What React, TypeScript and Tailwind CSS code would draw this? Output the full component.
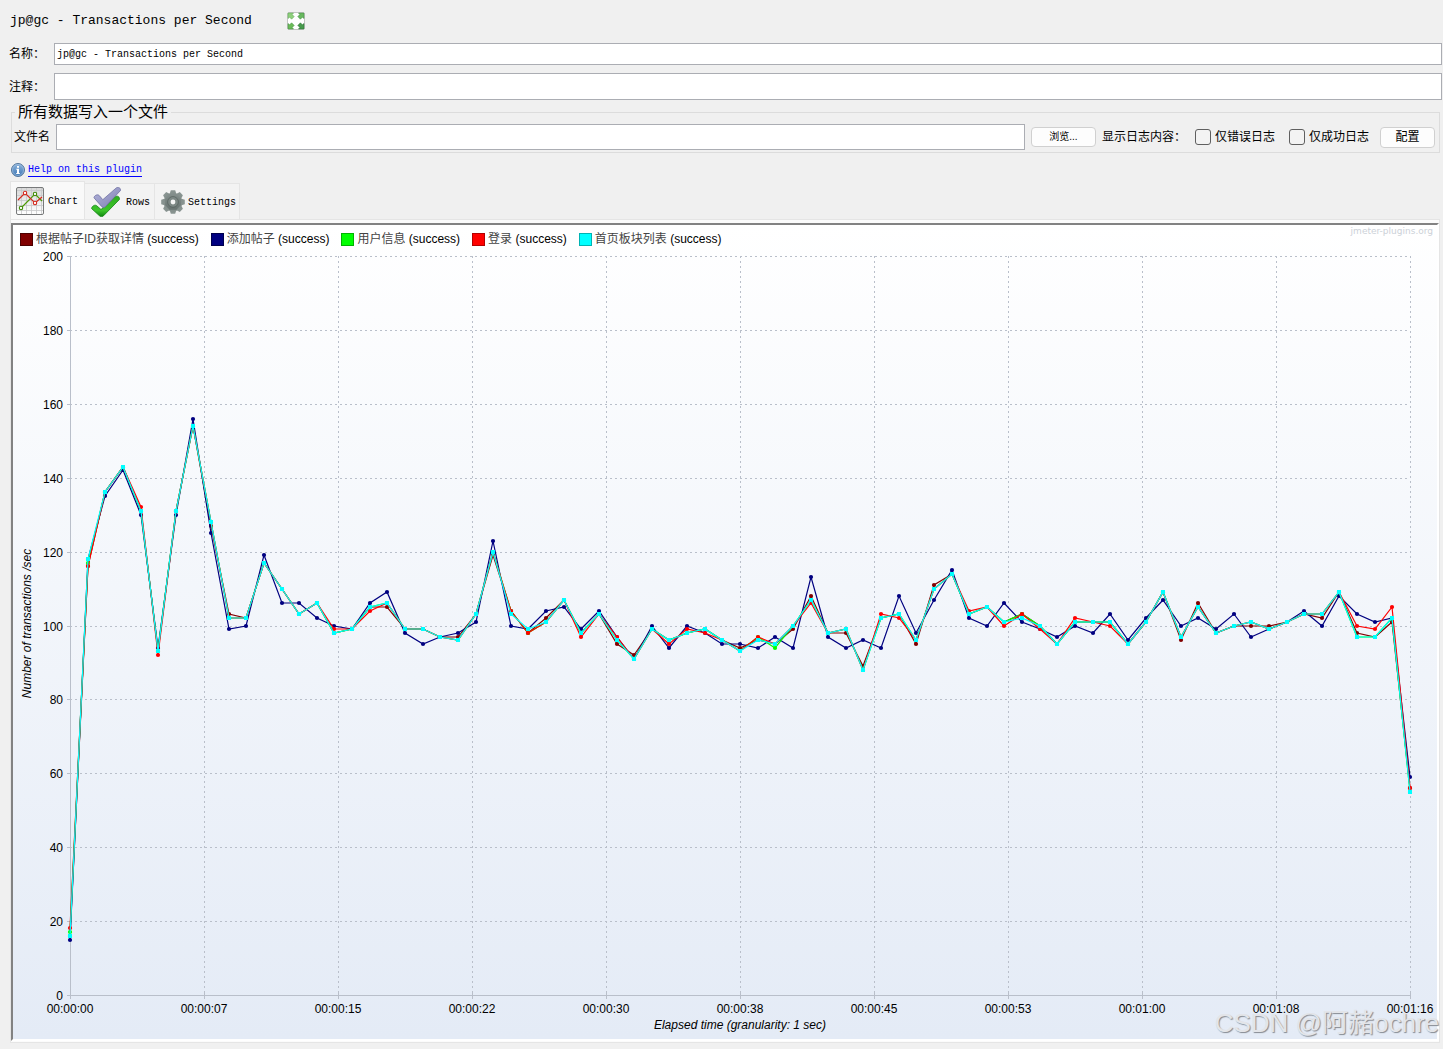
import React, { useEffect, useRef, useState } from 'react';

interface Series {
  name: string;
  color: string;
  edge: string;
  marker: 'circle' | 'square';
  values: number[];
}

// the first and last seconds are partial samples
const series: Series[] = [
  {
    name: '根据帖子ID获取详情',
    color: '#800000',
    edge: '#4d0000',
    marker: 'circle',
    values: [
      16, 116, 136, 143, 131, 93, 131, 154, 127, 103, 102, 117, 110, 103, 106,
      98, 99, 105, 105, 99, 99, 97, 97, 103, 119, 104, 98, 102, 107, 98, 103,
      95, 92, 99, 96, 98, 99, 96, 94, 96, 95, 99, 108, 98, 98, 89, 102, 103, 95,
      111, 114, 103, 105, 101, 103, 100, 95, 101, 101, 101, 95, 101, 109, 96,
      106, 98, 100, 100, 100, 101, 103, 102, 109, 98, 97, 101, 56,
    ],
  },
  {
    name: '添加帖子',
    color: '#000080',
    edge: '#00004d',
    marker: 'circle',
    values: [
      15, 118, 135, 142, 130, 94, 130, 156, 125, 99, 100, 119, 106, 106, 102,
      100, 99, 106, 109, 98, 95, 97, 98, 101, 123, 100, 99, 104, 105, 99, 104,
      97, 91, 100, 94, 100, 98, 95, 95, 94, 97, 94, 113, 97, 94, 96, 94, 108,
      98, 107, 115, 102, 100, 106, 101, 99, 97, 100, 98, 103, 96, 102, 107, 100,
      102, 99, 103, 97, 99, 101, 104, 100, 108, 103, 101, 102, 59,
    ],
  },
  {
    name: '用户信息',
    color: '#00ff00',
    edge: '#00b300',
    marker: 'circle',
    values: [
      17, 117, 136, 143, 131, 93, 131, 154, 128, 102, 102, 117, 110, 103, 106,
      98, 99, 105, 106, 99, 99, 97, 96, 103, 120, 104, 98, 101, 107, 98, 103,
      96, 91, 99, 96, 98, 99, 96, 93, 97, 94, 100, 107, 98, 99, 88, 102, 103,
      96, 110, 114, 103, 105, 101, 103, 100, 95, 101, 101, 101, 95, 101, 109,
      97, 105, 98, 100, 101, 99, 101, 103, 103, 109, 97, 97, 102, 55,
    ],
  },
  {
    name: '登录',
    color: '#ff0000',
    edge: '#b30000',
    marker: 'circle',
    values: [
      18, 116, 136, 143, 132, 92, 131, 154, 128, 102, 102, 117, 110, 103, 106,
      99, 99, 104, 106, 99, 99, 97, 96, 103, 120, 104, 98, 101, 107, 97, 103,
      97, 91, 99, 95, 99, 98, 96, 93, 97, 95, 100, 106, 98, 99, 88, 103, 102,
      96, 110, 114, 104, 105, 100, 103, 99, 95, 102, 101, 100, 95, 101, 109, 97,
      105, 98, 100, 101, 99, 101, 103, 103, 109, 100, 99, 105, 56,
    ],
  },
  {
    name: '首页板块列表',
    color: '#00ffff',
    edge: '#00b3b3',
    marker: 'square',
    values: [
      16, 118, 136, 143, 131, 93, 131, 154, 128, 102, 102, 117, 110, 103, 106,
      98, 99, 105, 106, 99, 99, 97, 96, 103, 120, 103, 99, 101, 107, 98, 103,
      96, 91, 99, 96, 98, 99, 96, 93, 96, 95, 100, 107, 98, 99, 88, 102, 103,
      96, 110, 114, 103, 105, 101, 102, 100, 95, 101, 101, 101, 95, 101, 109,
      97, 105, 98, 100, 101, 99, 101, 103, 103, 109, 97, 97, 102, 55,
    ],
  },
];

const timeLabels = [
  '00:00:00',
  '00:00:07',
  '00:00:15',
  '00:00:22',
  '00:00:30',
  '00:00:38',
  '00:00:45',
  '00:00:53',
  '00:01:00',
  '00:01:08',
  '00:01:16',
];

const rateLabels = [0, 20, 40, 60, 80, 100, 120, 140, 160, 180, 200];

const ExpandIcon = () => (
  <svg width="18" height="18" viewBox="0 0 18 18">
    <rect x="0.5" y="0.5" width="17" height="17" rx="1.5" fill="#fff" stroke="#c4c4c4" />
    <g strokeWidth="0.5">
      <path fill="#8fd07c" stroke="#5ba552" d="M1 1h5.5L5.2 2.600l2 2L4.600 7.200l-2-2L1 6.500z" />
      <path fill="#68b85f" stroke="#3c8a3c" d="M17 1h-5.500l1.300 1.600-2 2 2.600 2.600 2-2L17 6.500z" />
      <path fill="#6bbb58" stroke="#3c8a3c" d="M1 17h5.500l-1.300-1.600 2-2-2.600-2.600-2 2L1 11.500z" />
      <path fill="#479a4c" stroke="#2b6f31" d="M17 17h-5.500l1.300-1.600-2-2 2.600-2.600 2 2 1.600-1.300z" />
    </g>
  </svg>
);

const InfoIcon = () => (
  <svg width="14" height="14" viewBox="0 0 14 14">
    <defs>
      <linearGradient id="info" x1="0" y1="0" x2="0" y2="1">
        <stop offset="0" stopColor="#8db4dc" />
        <stop offset="1" stopColor="#3d77b5" />
      </linearGradient>
    </defs>
    <circle cx="7" cy="7" r="6.5" fill="url(#info)" stroke="#56789c" />
    <circle cx="7" cy="7" r="5.5" fill="none" stroke="#a9c5e2" strokeWidth="0.6" />
    <path fill="#fff" d="M6 3h2v1.700H6zM5.300 5.700H8V10h.8v1H5.200v-1H6V6.700h-.7z" />
  </svg>
);

const ChartIcon = () => (
  <svg width="28" height="28" viewBox="0 0 28 28">
    <defs>
      <linearGradient id="paper" x1="0" y1="0" x2="0" y2="1">
        <stop offset="0" stopColor="#d8d8d8" />
        <stop offset="1" stopColor="#fff" />
      </linearGradient>
    </defs>
    <rect x="0.5" y="0.5" width="27" height="27" rx="1.5" fill="url(#paper)" stroke="#77797a" />
    <path
      d="M5.500 1v26M10.500 1v26M15.500 1v26M20.500 1v26M25.500 1v26M1 3.500h26M1 8.500h26M1 13.500h26M1 18.500h26M1 23.500h26"
      stroke="#c6c8c9"
      strokeWidth="0.8"
    />
    <path d="M5 21 19 7l7 7" fill="none" stroke="#4e9a06" strokeWidth="1.2" />
    <path d="m2 13 7-7 10 10 7-6" fill="none" stroke="#d42a1e" strokeWidth="1.2" />
    <g fill="#fff" strokeWidth="1.1">
      <circle cx="9" cy="6" r="1.7" stroke="#d42a1e" />
      <circle cx="19" cy="16" r="1.7" stroke="#d42a1e" />
      <circle cx="5" cy="21" r="1.7" stroke="#3f8a05" />
      <circle cx="19" cy="7" r="1.7" stroke="#3f8a05" />
    </g>
  </svg>
);

const RowsIcon = () => (
  <svg width="30" height="30" viewBox="0 0 30 30">
    <defs>
      <linearGradient id="tickGreen" x1="0" y1="0" x2="0" y2="1">
        <stop offset="0" stopColor="#2fae20" />
        <stop offset="0.7" stopColor="#3cc42a" />
        <stop offset="1" stopColor="#0f8710" />
      </linearGradient>
      <linearGradient id="tickBlue" x1="0" y1="0" x2="1" y2="1">
        <stop offset="0" stopColor="#b4b5dc" />
        <stop offset="1" stopColor="#7d7fb2" />
      </linearGradient>
    </defs>
    <path
      d="M.6 21.600c0-2.400 3.700-4.600 5.400-2.600l4 3.500L24.500 9.600c2-1.300 4.600.4 3.900 2.900L12.600 28.700c-1.200 1.200-3 1.200-4.200 0z"
      fill="url(#tickGreen)"
      stroke="#138413"
      strokeWidth="0.8"
    />
    <path
      d="M3 10.800c0-2.200 3.600-4 5.200-2.300l3.600 4.200L25.300.9c2-1.200 4.800.2 4.200 2.600L14.300 19.800c-1 1-2.600 1-3.500-.1z"
      fill="url(#tickBlue)"
      stroke="#6e70a2"
      strokeWidth="0.8"
    />
  </svg>
);

const GearIcon = () => (
  <svg width="24" height="24" viewBox="0 0 24 24">
    <defs>
      <linearGradient id="gear" gradientUnits="userSpaceOnUse" x1="0" y1="0" x2="0" y2="24">
        <stop offset="0" stopColor="#8b9693" />
        <stop offset="1" stopColor="#5f6a68" />
      </linearGradient>
    </defs>
    <g fill="url(#gear)">
      <circle cx="12" cy="12" r="9.2" />
      {[0, 45, 90, 135, 180, 225, 270, 315].map((angle) => (
        <path key={angle} d="M9.800 0.200h4.400l1.200 4h-6.800z" transform={`rotate(${angle} 12 12)`} />
      ))}
    </g>
    <circle cx="12" cy="12" r="5.4" fill="none" stroke="#5b6663" strokeWidth="0.9" />
    <circle cx="12" cy="12" r="4.6" fill="#7d8885" />
    <circle cx="12" cy="12" r="2.4" fill="#f4f4f4" />
  </svg>
);

const Plot = () => {
  const ref = useRef<SVGSVGElement>(null);
  const [size, setSize] = useState({ width: 1424, height: 790 });

  // redraw the plot whenever the panel changes its size
  useEffect(() => {
    const svg = ref.current;
    if (!svg) return undefined;
    const observer = new ResizeObserver(() => {
      const box = svg.getBoundingClientRect();
      setSize({ width: Math.round(box.width), height: Math.round(box.height) });
    });
    observer.observe(svg);
    return () => observer.disconnect();
  }, []);

  const left = 57;
  const right = size.width - 27;
  const top = 7;
  const bottom = size.height - 44;
  const xAt = (ratio: number) => Math.round(left + (right - left) * ratio);
  const yAt = (value: number) => Math.round(bottom - ((bottom - top) * value) / 200);

  return (
    <svg
      ref={ref}
      className="block min-h-0 w-full flex-1 font-['Liberation_Sans',Arial,sans-serif] text-xs"
      role="img"
      aria-label="Transactions per Second"
    >
      <g stroke="#b9bfca" shapeRendering="crispEdges">
        {rateLabels.map((rate) => (
          <g key={rate}>
            <line x1={left - 3} x2={left} y1={yAt(rate) + 0.5} y2={yAt(rate) + 0.5} />
            <line
              x1={left}
              x2={right}
              y1={yAt(rate) + 0.5}
              y2={yAt(rate) + 0.5}
              strokeDasharray={rate === 0 ? undefined : '2 3'}
            />
          </g>
        ))}
        {timeLabels.map((label, i) => (
          <g key={label}>
            <line x1={xAt(i / 10) + 0.5} x2={xAt(i / 10) + 0.5} y1={bottom - 3} y2={bottom + 4} />
            <line
              x1={xAt(i / 10) + 0.5}
              x2={xAt(i / 10) + 0.5}
              y1={top}
              y2={bottom}
              strokeDasharray={i === 0 ? undefined : '2 3'}
            />
          </g>
        ))}
      </g>

      {series.map((row) => {
        const points = row.values.map((value, i) => ({
          x: xAt(i / (row.values.length - 1)),
          y: yAt(value),
        }));
        return (
          <g key={row.name} fill={row.color}>
            <polyline
              points={points.map((p) => `${p.x},${p.y}`).join(' ')}
              fill="none"
              stroke={row.color}
              strokeWidth="1.2"
            />
            {points.map((p) =>
              row.marker === 'circle' ? (
                <circle key={p.x} cx={p.x} cy={p.y} r="2.1" />
              ) : (
                <rect key={p.x} x={p.x - 2} y={p.y - 2} width="4" height="4" />
              )
            )}
          </g>
        );
      })}

      <g textAnchor="end">
        {rateLabels.map((rate) => (
          <text key={rate} x={left - 7} y={yAt(rate) + 5}>
            {rate}
          </text>
        ))}
      </g>
      <g textAnchor="middle">
        {timeLabels.map((label, i) => (
          <text key={label} x={xAt(i / 10)} y={bottom + 18}>
            {label}
          </text>
        ))}
        <text className="italic" x={(left + right) / 2} y={bottom + 34}>
          Elapsed time (granularity: 1 sec)
        </text>
        <text
          className="italic"
          transform={`translate(18 ${(top + bottom) / 2 - 2}) rotate(-90)`}
        >
          Number of transactions /sec
        </text>
      </g>
    </svg>
  );
};

const Legend = () => (
  <div className="flex h-6 items-start justify-between">
    <ul className="flex gap-3 pt-[6px] pl-[7px] text-xs leading-4">
      {series.map((row) => (
        <li key={row.name} className="flex items-center gap-[3px] whitespace-nowrap">
          <span
            className="h-[13px] w-[13px] border"
            style={{ backgroundColor: row.color, borderColor: row.edge }}
          />
          <span>
            <span className="text-[#444]">{row.name}</span> (success)
          </span>
        </li>
      ))}
    </ul>
    <span className="pr-1 font-['DejaVu_Sans',sans-serif] text-[9px] leading-3 text-[#ccd1d8]">
      jmeter-plugins.org
    </span>
  </div>
);

const Header = () => (
  <>
    <div className="flex h-[42px] items-center gap-[35px] pl-[10px]">
      <h1 className="font-['Liberation_Mono',monospace] text-[13px]">
        jp@gc - Transactions per Second
      </h1>
      <button type="button" aria-label="Expand">
        <ExpandIcon />
      </button>
    </div>
    <div className="mt-px flex flex-col gap-2 pr-px pl-[9px]">
      <div className="flex items-center">
        <label htmlFor="name" className="w-[45px]">
          名称：
        </label>
        <input
          id="name"
          className="h-[22px] flex-1 border border-[#abadb3] bg-white px-[2px] font-['Liberation_Mono',monospace] text-[10px]"
          defaultValue="jp@gc - Transactions per Second"
        />
      </div>
      <div className="flex items-center">
        <label htmlFor="comment" className="w-[45px]">
          注释：
        </label>
        <input id="comment" className="h-[27px] flex-1 border border-[#abadb3] bg-white px-[2px]" />
      </div>
    </div>
  </>
);

const FileBox = () => (
  <fieldset className="mt-1 mr-[3px] ml-[11px] border border-[#dcdcdc] px-[2px] pt-1 pb-[2px]">
    <legend className="ml-px px-[3px] text-[15px] leading-4">所有数据写入一个文件</legend>
    <div className="flex items-center">
      <label htmlFor="file" className="w-[42px] whitespace-nowrap">
        文件名
      </label>
      <input
        id="file"
        className="h-[26px] min-w-0 flex-1 border border-[#abadb3] bg-white px-[2px]"
      />
      <button
        type="button"
        className="ml-[6px] h-5 w-[65px] rounded-[4px] border border-[#d0d0d0] bg-[#fdfdfd] text-[10px]"
      >
        浏览...
      </button>
      <span className="ml-[6px] w-[93px] whitespace-nowrap">显示日志内容：</span>
      <label className="flex items-center gap-1 whitespace-nowrap">
        <input
          type="checkbox"
          className="h-4 w-4 appearance-none rounded-[3px] border border-[#5f5f5f] bg-[#f3f3f3] checked:bg-blue-600"
        />
        仅错误日志
      </label>
      <label className="ml-[14px] flex items-center gap-1 whitespace-nowrap">
        <input
          type="checkbox"
          className="h-4 w-4 appearance-none rounded-[3px] border border-[#5f5f5f] bg-[#f3f3f3] checked:bg-blue-600"
        />
        仅成功日志
      </label>
      <button
        type="button"
        className="mr-[2px] ml-[11px] h-[21px] w-[55px] rounded-[4px] border border-[#d0d0d0] bg-[#fdfdfd]"
      >
        配置
      </button>
    </div>
  </fieldset>
);

const Tabs = () => (
  <div
    role="tablist"
    className="mt-1 flex h-[38px] items-end pl-[10px] font-['Liberation_Mono',monospace] text-[10px]"
  >
    <button
      type="button"
      role="tab"
      aria-selected="true"
      className="flex h-[38px] w-[75px] items-center gap-1 border border-b-0 border-[#e5e5e5] bg-[#f9f9f9] pl-[5px]"
    >
      <ChartIcon />
      <span className="pt-[2px]">Chart</span>
    </button>
    <button
      type="button"
      role="tab"
      aria-selected="false"
      className="flex h-9 w-[70px] items-center gap-[5px] border border-b-0 border-l-0 border-[#e5e5e5] bg-[#f3f3f3] pl-[6px]"
    >
      <RowsIcon />
      <span className="pt-[2px]">Rows</span>
    </button>
    <button
      type="button"
      role="tab"
      aria-selected="false"
      className="flex h-9 w-[85px] items-center gap-[3px] border border-b-0 border-l-0 border-[#e5e5e5] bg-[#f3f3f3] pl-[6px]"
    >
      <GearIcon />
      <span className="pt-[2px]">Settings</span>
    </button>
  </div>
);

const App = () => (
  <div className="relative flex h-screen min-h-[500px] flex-col overflow-hidden bg-[#f0f0f0] pb-[6px] font-['Liberation_Sans','Noto_Sans_CJK_SC',sans-serif] text-xs text-black">
    <Header />
    <FileBox />
    <div className="mt-[10px] flex h-[14px] items-center gap-[3px] pl-[11px]">
      <InfoIcon />
      <a
        href="#help"
        className="border-b border-[#0000ff] font-['Liberation_Mono',monospace] text-[10px] leading-[13px] text-[#0000ff]"
      >
        Help on this plugin
      </a>
    </div>
    <Tabs />
    <div className="mr-[3px] ml-[10px] flex min-h-0 flex-1 flex-col border border-[#e5e5e5] bg-[#fbfbfb] pt-[3px] pb-px">
      <div className="flex min-h-0 flex-1 flex-col border-2 border-t-[#828282] border-r-white border-b-white border-l-[#828282] bg-linear-to-b from-white to-[#e4ebf6]">
        <Legend />
        <Plot />
      </div>
    </div>
    <span className="pointer-events-none absolute right-1 bottom-2 text-[26px] leading-9 text-[#e3e5e9] [text-shadow:1px_1px_1px_#858a92]">
      CSDN @阿赭ochre
    </span>
  </div>
);

export default App;
